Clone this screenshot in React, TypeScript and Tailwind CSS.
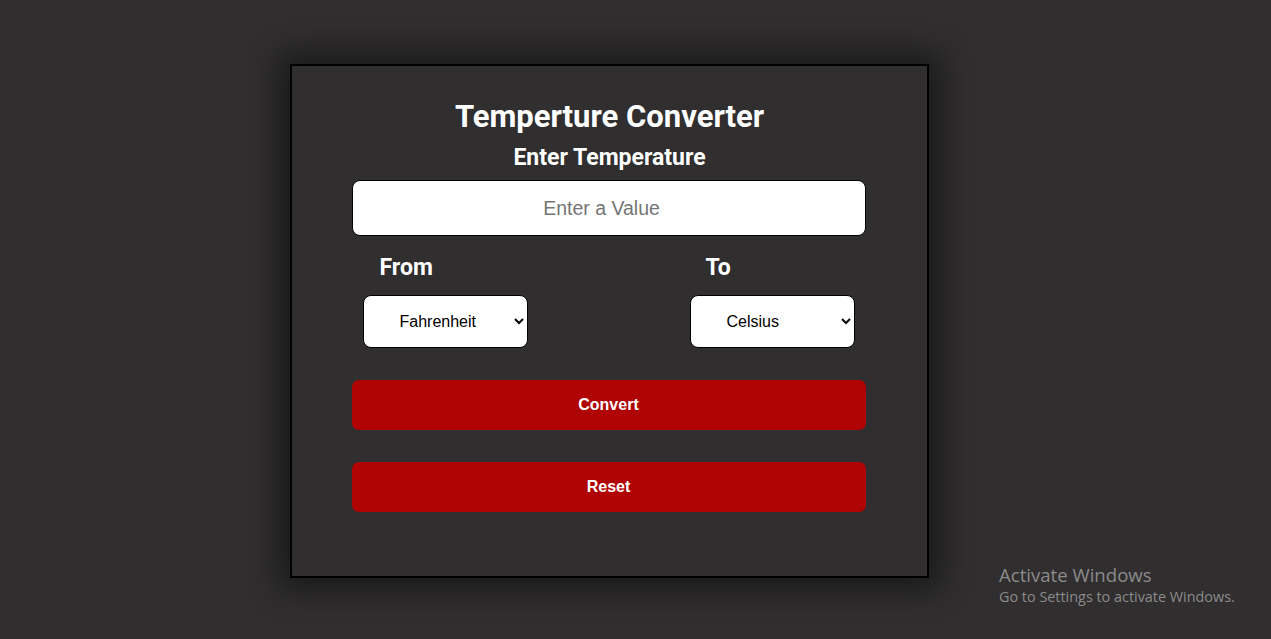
const head = "font-['Roboto',sans-serif] font-bold text-white";
const body = "font-['Liberation_Sans',Arial,sans-serif]";

function Picker({ label, value, labelPad }: { label: string; value: string; labelPad: string }) {
  return (
    <div className="flex flex-col w-[165px]">
      <span className={`${head} text-[23px] leading-[28px] ${labelPad}`}>{label}</span>
      <select
        defaultValue={value}
        className={`${body} mt-[13px] w-[165px] h-[53px] rounded-[8px] border border-black bg-white text-black text-[16px] text-left pl-[32px] pr-[8px]`}
      >
        <option>Fahrenheit</option>
        <option>Celsius</option>
        <option>Kelvin</option>
      </select>
    </div>
  );
}

export default function App() {
  return (
    <div className="relative min-h-[639px] w-full bg-[#302e2f] overflow-hidden">
      <div className="pt-[64px] pl-[290px]">
        <div className="w-[639px] h-[514px] border-2 border-black bg-[#302e2f] shadow-[0_0_30px_12px_rgba(0,0,0,0.45)] flex flex-col items-center pt-[31px]">
          <h1 className={`${head} text-[31px] leading-[40px]`}>Temperture Converter</h1>
          <h2 className={`${head} text-[23px] leading-[30px] mt-[6px]`}>Enter Temperature</h2>
          <input
            placeholder="Enter a Value"
            className={`${body} mt-[7px] -translate-x-[1px] w-[514px] h-[56px] rounded-[8px] border border-black bg-white text-center text-[19.5px] pr-[14px] placeholder:text-[#757575] outline-none`}
          />
          <div className="w-[514px] flex justify-between mt-[18px] px-[11px] -translate-x-[1px]">
            <Picker label="From" value="Fahrenheit" labelPad="pl-[17px]" />
            <Picker label="To" value="Celsius" labelPad="pl-[16px]" />
          </div>
          <button className={`${body} mt-[32px] -translate-x-[1px] w-[514px] h-[50px] rounded-[7px] bg-[#b00404] text-white text-[16px] font-bold`}>
            Convert
          </button>
          <button className={`${body} mt-[32px] -translate-x-[1px] w-[514px] h-[50px] rounded-[7px] bg-[#b00404] text-white text-[16px] font-bold`}>
            Reset
          </button>
        </div>
      </div>
      <div className="absolute left-[999px] top-[563px] text-[#8b8b8b] pointer-events-none font-['Open_Sans','Noto_Sans',sans-serif]">
        <div className="text-[18.6px] leading-[24px]">Activate Windows</div>
        <div className="text-[14.4px] leading-[20px]">Go to Settings to activate Windows.</div>
      </div>
    </div>
  );
}
